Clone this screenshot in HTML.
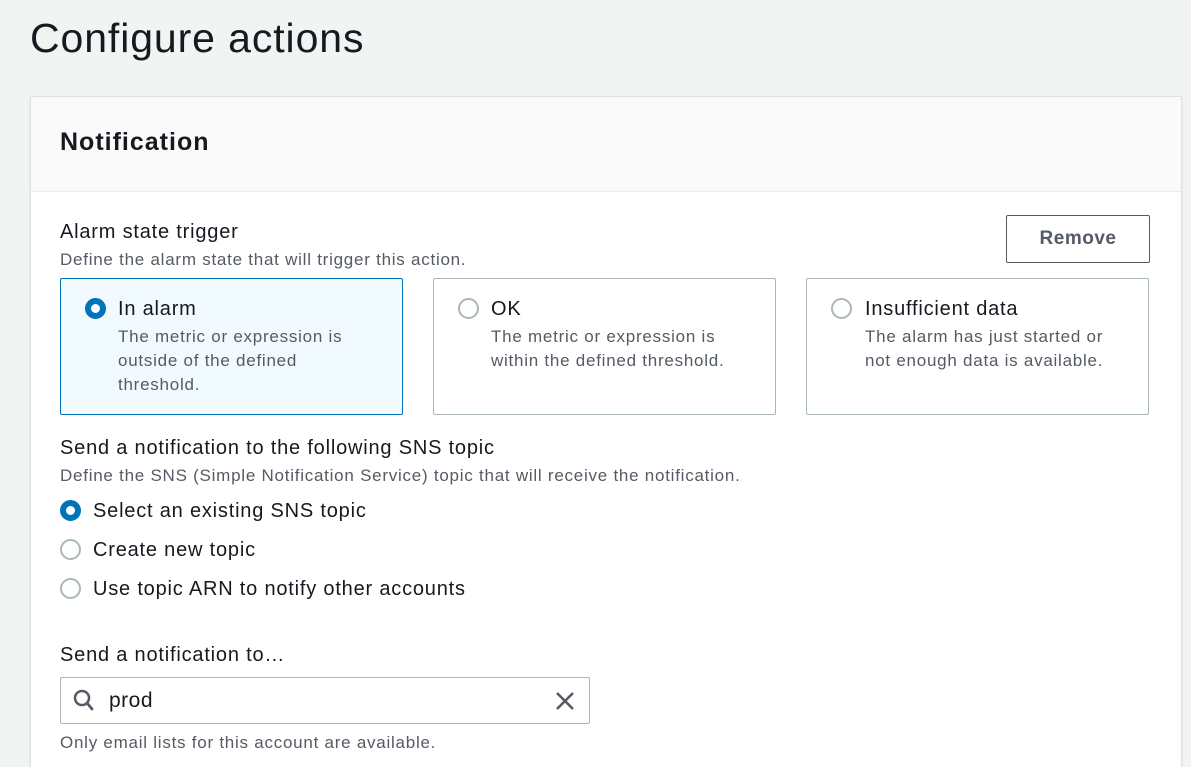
<!DOCTYPE html>
<html><head><meta charset="utf-8"><style>
html,body{margin:0;overflow:hidden}
body{width:1191px;height:767px;background:#f2f3f3;font-family:"Liberation Sans",sans-serif;color:#16191f;position:relative}
.a{position:absolute;white-space:nowrap}
h1{position:absolute;left:30px;top:12px;margin:0;font-weight:400;font-size:41px;line-height:52px;letter-spacing:0.9px}
.card{position:absolute;left:30px;top:96px;width:1150px;height:680px;background:#fff;border:1px solid #e0e2e2;box-shadow:0 1px 2px rgba(0,0,0,.1)}
.hdr{position:absolute;left:0;top:0;right:0;height:94px;background:#fafafa;border-bottom:1px solid #eaeded}
.lbl{font-size:20px;line-height:24px;letter-spacing:0.8px}
.desc{font-size:17px;color:#545b64;line-height:24px;letter-spacing:0.75px}
.tile{position:absolute;top:278px;width:341px;height:135px;border:1px solid #aab7b8;border-radius:2px;background:#fff}
.tile.sel{border-color:#0073bb;background:#f1faff}
.r{position:absolute;width:17px;height:17px;border:2px solid #aab7b8;border-radius:50%;background:#fff}
.r.on{border:6px solid #0073bb;width:9px;height:9px}
</style></head><body>
<h1>Configure actions</h1>
<div class="card"><div class="hdr"></div></div>
<div class="a" style="left:60px;top:127px;font-size:25px;font-weight:700;line-height:30px;letter-spacing:1px">Notification</div>
<div class="a lbl" style="left:60px;top:220px">Alarm state trigger</div>
<div class="a desc" style="left:60px;top:248px">Define the alarm state that will trigger this action.</div>
<div class="a" style="left:1006px;top:215px;width:142px;height:46px;border:1px solid #545b64;border-radius:2px;background:#fff;text-align:center;line-height:46px;font-weight:700;font-size:19px;color:#545b64;letter-spacing:0.5px">Remove</div>

<div class="tile sel" style="left:60px"></div>
<div class="r on" style="left:85px;top:298px"></div>
<div class="a lbl" style="left:118px;top:297px">In alarm</div>
<div class="a desc" style="left:118px;top:325px">The metric or expression is<br>outside of the defined<br>threshold.</div>

<div class="tile" style="left:433px"></div>
<div class="r" style="left:458px;top:298px"></div>
<div class="a lbl" style="left:491px;top:297px">OK</div>
<div class="a desc" style="left:491px;top:325px">The metric or expression is<br>within the defined threshold.</div>

<div class="tile" style="left:806px"></div>
<div class="r" style="left:831px;top:298px"></div>
<div class="a lbl" style="left:865px;top:297px">Insufficient data</div>
<div class="a desc" style="left:865px;top:325px">The alarm has just started or<br>not enough data is available.</div>

<div class="a lbl" style="left:60px;top:436px">Send a notification to the following SNS topic</div>
<div class="a desc" style="left:60px;top:464px">Define the SNS (Simple Notification Service) topic that will receive the notification.</div>
<div class="r on" style="left:60px;top:500px"></div>
<div class="a lbl" style="left:93px;top:499px">Select an existing SNS topic</div>
<div class="r" style="left:60px;top:539px"></div>
<div class="a lbl" style="left:93px;top:538px">Create new topic</div>
<div class="r" style="left:60px;top:578px"></div>
<div class="a lbl" style="left:93px;top:577px">Use topic ARN to notify other accounts</div>

<div class="a lbl" style="left:60px;top:643px">Send a notification to…</div>
<div class="a" style="left:60px;top:677px;width:528px;height:45px;border:1px solid #aab7b8;border-radius:2px;background:#fff"></div>
<svg class="a" style="left:70px;top:688px" width="28" height="24" viewBox="0 0 28 24"><circle cx="12" cy="10" r="7" fill="none" stroke="#545b64" stroke-width="2.5"/><path d="M17 15l5 6" stroke="#545b64" stroke-width="2.8" stroke-linecap="round"/></svg>
<div class="a" style="left:109px;top:689px;font-size:21px;line-height:24px;letter-spacing:0.5px">prod</div>
<svg class="a" style="left:553px;top:689px" width="24" height="24" viewBox="0 0 24 24"><path d="M4 4L20 20M20 4L4 20" stroke="#545b64" stroke-width="2.6"/></svg>
<div class="a desc" style="left:60px;top:731px">Only email lists for this account are available.</div>
</body></html>
